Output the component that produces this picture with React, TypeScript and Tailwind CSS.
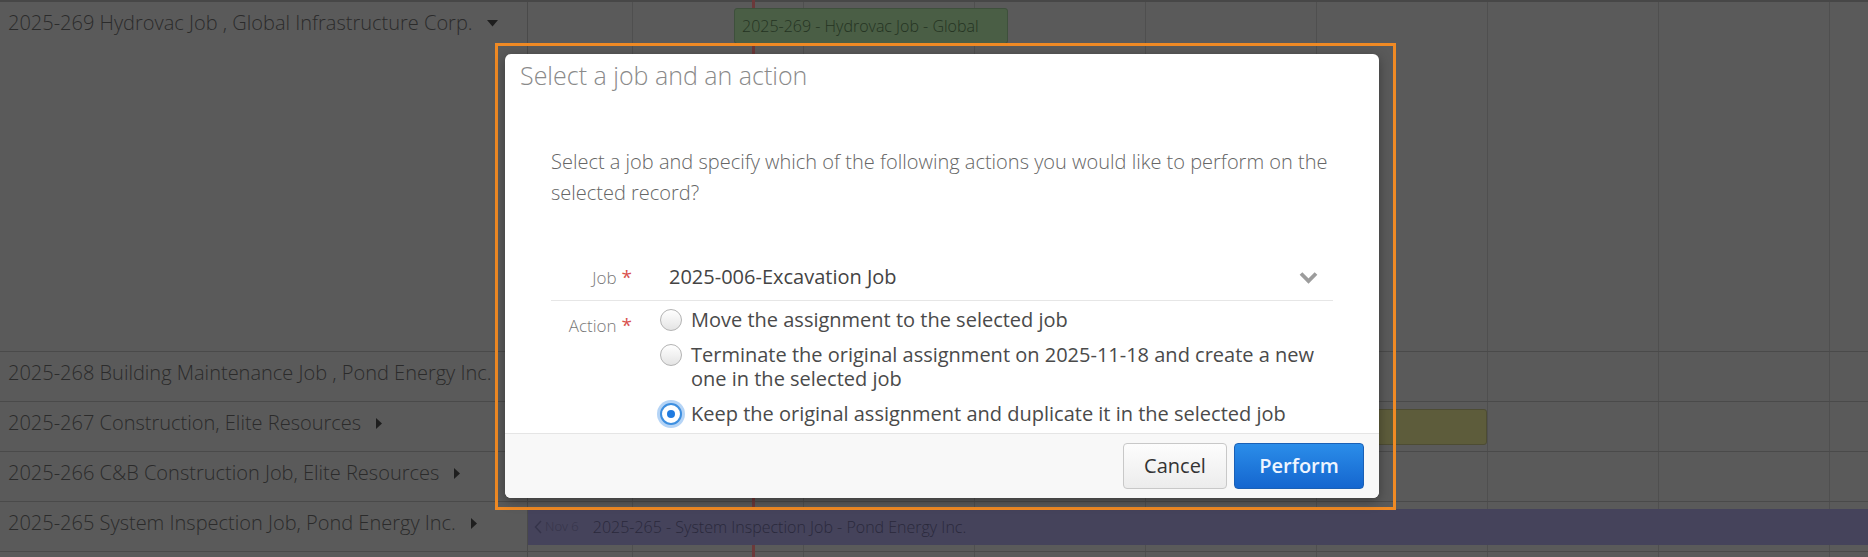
import React from 'react'

interface RowItem {
  label: string
  caret?: 'down' | 'right'
  tall?: boolean
  bar?: 'green' | 'yellow' | 'purple'
}

const rows: RowItem[] = [
  { label: '2025-269 Hydrovac Job , Global Infrastructure Corp.', caret: 'down', tall: true, bar: 'green' },
  { label: '2025-268 Building Maintenance Job , Pond Energy Inc.', caret: 'right' },
  { label: '2025-267 Construction, Elite Resources', caret: 'right', bar: 'yellow' },
  { label: '2025-266 C&B Construction Job, Elite Resources', caret: 'right' },
  { label: '2025-265 System Inspection Job, Pond Energy Inc.', caret: 'right', bar: 'purple' },
  { label: '' },
]

function Caret({ dir }: { dir: 'down' | 'right' }) {
  if (dir === 'down')
    return (
      <svg width="11" height="7" viewBox="0 0 11 7" className="ml-[14px] mt-[11px] shrink-0">
        <polygon points="0,0 11,0 5.5,6.5" fill="#1e1e1e" />
      </svg>
    )
  return (
    <svg width="6" height="11" viewBox="0 0 6 11" className="ml-[15px] mt-[9px] shrink-0">
      <polygon points="0,0 6,5.5 0,11" fill="#1e1e1e" />
    </svg>
  )
}

function TimelineBar({ kind }: { kind: 'green' | 'yellow' | 'purple' }) {
  if (kind === 'green')
    return (
      <div className="absolute left-[206px] top-[6px] h-[36px] w-[274px] rounded-[3px] border border-[#3e503c] bg-[#4a5e45] pl-[7px] text-[16px] font-light leading-[34px] text-[#243322]">
        2025-269 - Hydrovac Job - Global
      </div>
    )
  if (kind === 'yellow')
    return (
      <div className="absolute left-[560px] top-[7px] h-[36px] w-[399px] rounded-[3px] border border-[#4d4c33] bg-[#5d5c3b]" />
    )
  return (
    <div className="absolute left-0 right-0 top-[7px] flex h-[36px] items-center bg-[#45435b] text-[#2a293b]">
      <svg width="8" height="14" viewBox="0 0 8 14" className="ml-[6px] shrink-0">
        <polyline points="7,1 1.5,7 7,13" fill="none" stroke="#35344a" strokeWidth="1.4" />
      </svg>
      <span className="ml-[3px] text-[13px] font-light text-[#35344a]">Nov 6</span>
      <span className="ml-[14px] text-[16px] font-light">2025-265 - System Inspection Job - Pond Energy Inc.</span>
    </div>
  )
}

function Row({ row }: { row: RowItem }) {
  return (
    <div className={`flex border-b border-[#4a4a4a] ${row.tall ? 'h-[350px]' : 'h-[50px]'}`}>
      <div className="flex w-[528px] shrink-0 items-start border-r border-[#4a4a4a] pl-[8px] pt-[7px] text-[20px] font-light leading-[28px] text-[#2b2b2b]">
        <span className="whitespace-nowrap">{row.label}</span>
        {row.caret && <Caret dir={row.caret} />}
      </div>
      <div className="relative flex flex-1">
        <div className="w-[104px] shrink-0" />
        {[0, 1, 2, 3, 4, 5, 6].map((i) => (
          <div key={i} className="w-[171px] shrink-0 border-l border-[#4f4f4f]" />
        ))}
        <div className="flex-1 border-l border-[#4f4f4f]" />
        {row.bar && <TimelineBar kind={row.bar} />}
      </div>
    </div>
  )
}

function Radio({ checked }: { checked?: boolean }) {
  if (checked)
    return (
      <span className="mt-[1px] flex h-[22px] w-[22px] shrink-0 items-center justify-center rounded-full border-2 border-[#3d8fe0] bg-white shadow-[0_0_0_3px_rgba(90,160,235,0.45)]">
        <span className="h-[8px] w-[8px] rounded-full bg-[#1f7be0]" />
      </span>
    )
  return (
    <span className="mt-[1px] h-[22px] w-[22px] shrink-0 rounded-full border border-[#b3b3b3] bg-gradient-to-b from-white to-[#e4e4e4]" />
  )
}

function Modal() {
  const options = [
    'Move the assignment to the selected job',
    'Terminate the original assignment on 2025-11-18 and create a new one in the selected job',
    'Keep the original assignment and duplicate it in the selected job',
  ]
  return (
    <div className="absolute left-[505px] top-[54px] flex h-[444px] w-[874px] flex-col overflow-hidden rounded-[6px] bg-white shadow-[0_3px_12px_rgba(0,0,0,0.35)]">
      <div className="px-[15px] pt-[5px] text-[25px] font-light leading-[32px] text-[#8a8a8a]">
        Select a job and an action
      </div>

      <div className="flex-1 overflow-hidden px-[46px] pt-[55px]">
        <p className="text-[20px] font-light leading-[31px] text-[#666]">
          Select a job and specify which of the following actions you would like to perform on the selected record?
        </p>

        <div className="mt-[46px] flex h-[47px] items-center border-b border-[#e6e6e6]">
          <div className="w-[81px] shrink-0 text-right text-[17px] font-light leading-[24px] text-[#777]">
            Job<span className="ml-[5px] text-[19px] font-normal text-[#d9534f]">*</span>
          </div>
          <div className="ml-[28px] flex flex-1 items-center pl-[9px] pr-[15px]">
            <span className="text-[20px] leading-[24px] text-[#444]">2025-006-Excavation Job</span>
            <svg width="19" height="13" viewBox="0 0 19 13" className="ml-auto">
              <polyline points="2,2.5 9.5,10 17,2.5" fill="none" stroke="#9c9c9c" strokeWidth="3.8" />
            </svg>
          </div>
        </div>

        <div className="flex">
          <div className="w-[81px] shrink-0 pt-[12px] text-right text-[17px] font-light leading-[24px] text-[#777]">
            Action<span className="ml-[5px] text-[19px] font-normal text-[#d9534f]">*</span>
          </div>
          <div className="ml-[28px] flex flex-1 flex-col gap-[11px] pt-[7px]">
            {options.map((o, i) => (
              <label key={i} className="flex items-start gap-[9px]">
                <Radio checked={i === 2} />
                <span className="text-[20px] leading-[24px] text-[#4a4a4a]">{o}</span>
              </label>
            ))}
          </div>
        </div>
      </div>

      <div className="flex h-[65px] shrink-0 items-center justify-end gap-[7px] border-t border-[#e5e5e5] bg-[#f8f8f8] px-[15px]">
        <button className="h-[46px] w-[104px] rounded-[4px] border border-[#c8c8c8] bg-gradient-to-b from-[#fdfdfd] to-[#ececec] text-[20px] text-[#333]">
          Cancel
        </button>
        <button className="h-[46px] w-[130px] rounded-[4px] border border-[#1a60b6] bg-gradient-to-b from-[#2b8de9] to-[#1566cf] text-[20px] font-semibold text-[#eef5ff]">
          Perform
        </button>
      </div>
    </div>
  )
}

export default function App() {
  return (
    <div className="relative h-[557px] w-[1868px] overflow-hidden bg-[#5a5a5a] font-['Open_Sans',sans-serif]">
      <div className="absolute bottom-0 left-[752px] top-0 w-[3px] bg-[#6c393a]" />
      <div className="border-t-2 border-[#474747]">
        {rows.map((r, i) => (
          <Row key={i} row={r} />
        ))}
      </div>

      {/* highlight frame round the dialog */}
      <div className="pointer-events-none absolute left-[495px] top-[43px] h-[467px] w-[901px] border-[3px] border-[#f08a24]" />
      <Modal />
    </div>
  )
}
